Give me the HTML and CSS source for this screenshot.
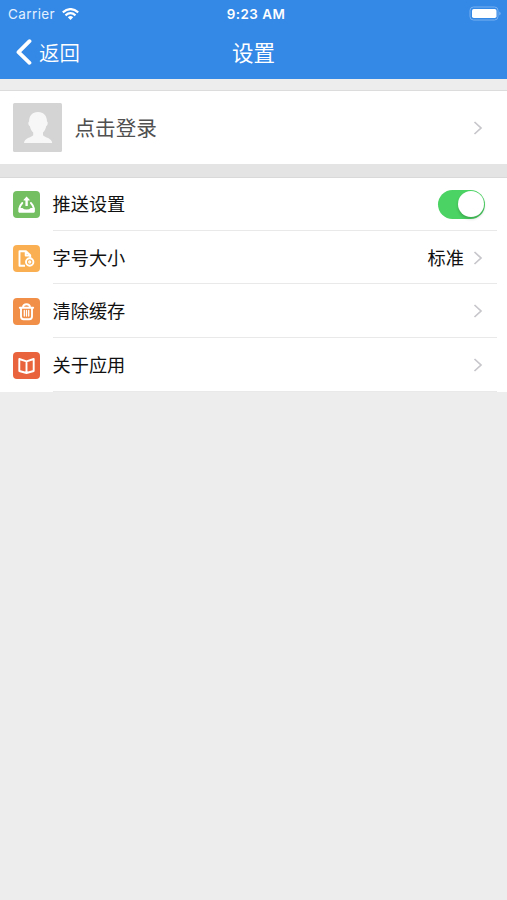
FILE: index.html
```html
<!DOCTYPE html>
<html lang="zh-CN">
<head>
<meta charset="utf-8">
<title>设置</title>
<link rel="stylesheet" href="styles.css">
</head>
<body>
<header class="header">
  <div class="status">
    <div class="carrier">Carrier
      <svg class="wifi" width="17" height="12" viewBox="0 0 17 12" fill="none" stroke="#fff" stroke-width="2.200"><path d="M.8 4.300Q8.500-2.100 16.200 4.300M3.500 7.300Q8.500 3 13.500 7.300"/><path d="M5.800 9.200Q8.500 7 11.200 9.200L8.500 12Z" fill="#fff" stroke="none"/></svg>
    </div>
    <div class="time">9:23 AM</div>
    <svg class="battery" width="33" height="15" viewBox="0 0 33 15"><rect x="1" y="1" width="28" height="13" rx="3.500" fill="none" stroke="#78b1f1"/><rect x="3" y="3" width="24.500" height="9" rx="1.800" fill="#fff"/><path d="M30.500 5.500q2 2 0 4z" fill="#9cc7f6"/></svg>
  </div>
  <nav class="nav">
    <a class="back"><svg width="17" height="28" viewBox="0 0 17 28" fill="none" stroke="#fff" stroke-width="3.800" stroke-linecap="round" stroke-linejoin="round"><path d="M14.500 3.200 3.500 14.200 14.500 24.800"/></svg><span>返回</span></a>
    <h1 class="title label">设置</h1>
    <span></span>
  </nav>
</header>
<main>
  <section class="profile">
    <svg class="avatar" width="49" height="49" viewBox="0 0 49 49"><rect width="49" height="49" rx="1.500" fill="#d4d4d4"/><path d="M25 9c5.800 0 9 4 9 9.500 1.300.5.800 4-.7 4.500-.7 3-1.600 5-3.300 6.500v2.700c2 2.500 8.800 2.500 9.200 7.800H11c.4-5.300 7.200-5.300 9.200-7.800v-2.700c-1.800-1.500-2.700-3.500-3.400-6.500-1.500-.5-2-4-.7-4.500C16 13 19.200 9 25 9z" fill="#f7f7f7"/></svg>
    <span class="login label">点击登录</span>
    <svg class="chevron" width="10" height="14" viewBox="0 0 10 14"><path d="M1.500 1 8 7 1.500 13"/></svg>
  </section>
  <section class="list">
    <div class="row">
      <svg class="icon" width="27" height="27" viewBox="0 0 27 27"><rect width="27" height="27" rx="4" fill="#73bf61"/><path d="M9.300 12Q7.300 14 6.300 17.500V20.500H20.900V17.500Q19.900 14 17.900 12" fill="none" stroke="#fff" stroke-width="1.900" stroke-linejoin="round" stroke-linecap="round"/><path d="M6 17h3.500q1.300 1.500 4.100 1.500t4.100-1.500h3.500v4.400H6z" fill="#fff"/><path d="M13.600 5.500 16.600 8.700q.4.900-.6.900H14.800V15h-2.400V9.600h-1.200q-1 0-.6-.9z" fill="#fff"/></svg>
      <div class="cell"><span class="label">推送设置</span><span class="switch"></span></div>
    </div>
    <div class="row">
      <svg class="icon" width="27" height="27" viewBox="0 0 27 27"><rect width="27" height="27" rx="4" fill="#fab052"/><g fill="none" stroke="#fff" stroke-width="1.900" stroke-linejoin="round"><path d="M12 20.700H6.500V6.200H13l4.200 4v2.500M12.700 6.200v4.300h4.500"/><circle cx="16.700" cy="17" r="3.700"/><circle cx="16.700" cy="17" r="1" stroke-width="1.300"/></g></svg>
      <div class="cell"><span class="label">字号大小</span><span class="value label">标准</span><svg class="chevron" width="10" height="14" viewBox="0 0 10 14"><path d="M1.500 1 8 7 1.500 13"/></svg></div>
    </div>
    <div class="row">
      <svg class="icon" width="27" height="27" viewBox="0 0 27 27"><rect width="27" height="27" rx="4" fill="#f18f48"/><g fill="none" stroke="#fff" stroke-width="1.900" stroke-linejoin="round" stroke-linecap="round"><path d="M6.800 9.700h13.400M8 10v8.600q0 2.700 2.700 2.700h5.600q2.700 0 2.700-2.700V10M10 9q.3-2.700 3.500-2.700T17 9"/><path d="M11.300 12.500v5.500M13.500 12.500v5.500M15.700 12.500v5.500" stroke-width="1.300"/></g></svg>
      <div class="cell"><span class="label">清除缓存</span><svg class="chevron" width="10" height="14" viewBox="0 0 10 14"><path d="M1.500 1 8 7 1.500 13"/></svg></div>
    </div>
    <div class="row">
      <svg class="icon" width="27" height="27" viewBox="0 0 27 27"><rect width="27" height="27" rx="4" fill="#e9643c"/><path d="M13.500 9.300 6.300 7v12l7.200 2 7.200-2V7zV20.500" fill="none" stroke="#fff" stroke-width="1.900" stroke-linejoin="round"/></svg>
      <div class="cell"><span class="label">关于应用</span><svg class="chevron" width="10" height="14" viewBox="0 0 10 14"><path d="M1.500 1 8 7 1.500 13"/></svg></div>
    </div>
  </section>
</main>
</body>
</html>
```
FILE: styles.css
```css
* { box-sizing: border-box; }
body {
  margin: 0;
  min-height: 900px;
  background: #ededed;
  color: #111;
  font-family: Inter, "Noto Sans CJK SC", sans-serif;
  font-size: 18.2px;
}
svg { display: block; flex: none; }
.label { padding-bottom: 2px; }
.header { height: 79px; background: #3488e6; color: #fff; }
.status, .nav {
  display: grid;
  grid-template-columns: 1fr auto 1fr;
  align-items: center;
}
.status { height: 27px; padding: 0 5px 0 8px; font-size: 13.5px; }
.carrier { display: flex; align-items: center; gap: 7px; color: #e3f0ff; letter-spacing: .4px; }
.time { padding-left: 2px; font-size: 13.4px; font-weight: 600; letter-spacing: .5px; }
.battery { justify-self: end; }
.nav { height: 50px; padding: 0 15px; }
.back { display: flex; align-items: center; gap: 7px; font-size: 20.4px; font-weight: 350; }
.title { margin: 0; font-size: 21.5px; font-weight: 400; }
.profile {
  display: flex;
  align-items: center;
  height: 74px;
  margin-top: 11px;
  padding: 0 24px 0 13px;
  border-top: 1px solid #dcdcdc;
  background: #fff;
}
.login { flex: 1; margin-left: 12.5px; color: #505050; font-size: 20.6px; }
.chevron { fill: none; stroke: #c6c6cb; stroke-width: 1.7; }
.list { border-top: 13px solid #e4e4e4; background: #fff; box-shadow: inset 0 1px #d9d9d9; }
.row { display: flex; align-items: center; height: 53.7px; padding: 0 10px 0 13px; }
.icon { margin: 1px 12.5px 0 0; }
.cell {
  display: flex;
  flex: 1;
  align-items: center;
  justify-content: space-between;
  height: 100%;
  padding: 1.5px 14px 0 0;
  border-bottom: 1px solid #e9e9e9;
}
.value { margin-left: auto; margin-right: 9px; }
.switch {
  display: flex;
  justify-content: flex-end;
  width: 47px;
  height: 29px;
  margin-right: -2px;
  padding: 1.5px;
  border-radius: 15px;
  background: #4bd363;
}
.switch::after {
  content: "";
  width: 26px;
  height: 26px;
  border-radius: 50%;
  background: #fff;
  box-shadow: 0 2px 3px #0003;
}
```
